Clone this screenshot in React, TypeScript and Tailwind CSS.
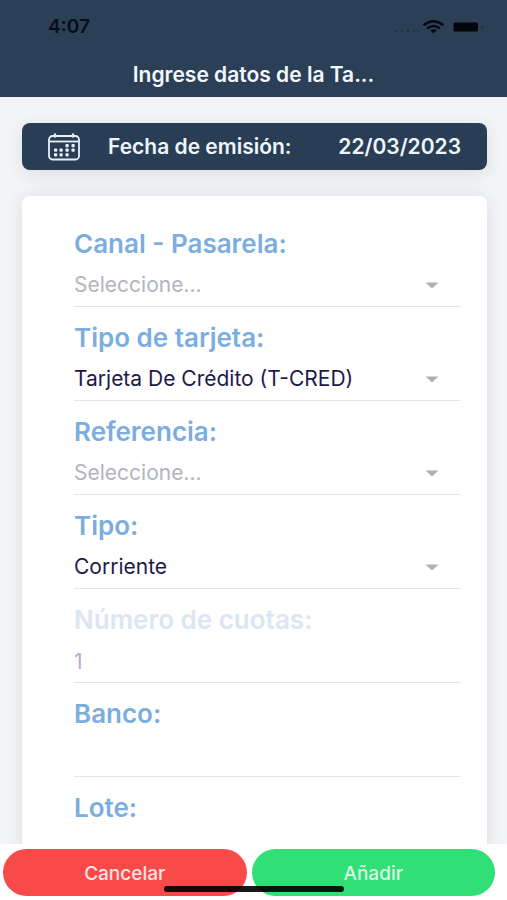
import React from 'react';
import clsx from 'clsx';

interface FieldProps {
  id: string;
  label: string;
  value?: string;
  options?: string[];
  disabled?: boolean;
}

const CONTROL = 'h-[47px] w-full appearance-none border-b border-[#dfe5ef] bg-transparent pt-1 text-[21px] outline-none';

const Field: React.FC<FieldProps> = ({ id, label, value = '', options, disabled }) => (
  <div>
    <label
      htmlFor={id}
      className={clsx(
        'block text-[26px] leading-8 font-semibold',
        disabled ? 'text-[#dce6f3]' : 'text-[#7badde]'
      )}
    >
      {label}
    </label>
    {options ? (
      <div className="relative">
        <select
          id={id}
          defaultValue={value}
          className={clsx(CONTROL, value ? 'text-[#1d1a4b]' : 'text-[#b4b4bd]')}
        >
          {!value && <option value="">Seleccione...</option>}
          {options.map((option) => (
            <option key={option} value={option}>{option}</option>
          ))}
        </select>
        <svg
          viewBox="0 0 14 7"
          className="pointer-events-none absolute top-[22px] right-[21px] h-[7px] w-3.5 fill-[#b0b0b3]"
          aria-hidden="true"
        >
          <path d="M0.5 0.5h13L7 6.5z" />
        </svg>
      </div>
    ) : (
      <input
        id={id}
        type="text"
        defaultValue={value}
        disabled={disabled}
        className={clsx(CONTROL, 'block', disabled ? 'text-[#b5a9d6]' : 'text-[#1d1a4b]')}
      />
    )}
  </div>
);

const CalendarIcon = () => (
  <svg viewBox="0 0 32 28" className="h-7 w-8 shrink-0" fill="none" stroke="#e6f0fa" aria-hidden="true">
    <rect x="1" y="3" width="30" height="23.5" rx="3.5" strokeWidth="1.8" />
    <path d="M1 8.5h30" strokeWidth="1.8" />
    <path d="M7 1.5v2M25 1.5v2" strokeWidth="2.4" strokeLinecap="round" />
    <g fill="#e6f0fa" stroke="none">
      {[19, 25].map((x) => <rect key={x} x={x - 1.5} y="11" width="3.2" height="3.2" rx="0.8" />)}
      {[7.5, 13, 19, 25].map((x) => <rect key={x} x={x - 1.5} y="15.5" width="3.2" height="3.2" rx="0.8" />)}
      {[7.5, 13, 19].map((x) => <rect key={x} x={x - 1.5} y="20.2" width="3.2" height="3.2" rx="0.8" />)}
    </g>
  </svg>
);

const StatusIcons = () => (
  <svg viewBox="0 0 92 16" className="h-4 w-[92px]" aria-hidden="true">
    <g fill="#1d2c3f">
      <circle cx="3" cy="12" r="1" />
      <circle cx="9" cy="12" r="1" />
      <circle cx="15" cy="12" r="1" />
      <circle cx="21" cy="12" r="1" />
    </g>
    <g fill="none" stroke="#050a12" strokeWidth="2.4">
      <path d="M30.5 6.2Q40.500 -1.8 50.5 6.2" />
      <path d="M34.3 9.5Q40.5 4.5 46.7 9.5" />
    </g>
    <path d="M37.3 11.5Q40.5 9 43.7 11.5L40.5 14.3z" fill="#050a12" />
    <rect x="58.5" y="1.5" width="28" height="13" rx="3" fill="none" stroke="#35404f" strokeWidth="1.2" />
    <rect x="60.5" y="3.5" width="24.5" height="9" rx="1.5" fill="#02060c" />
    <path d="M88.5 6q3 2 0 4z" fill="#1d2c3f" />
  </svg>
);

export default function App() {
  return (
    <div className="relative flex h-screen flex-col overflow-hidden bg-[#f3f4f7] font-['Inter',sans-serif]">
      <header className="shrink-0 bg-[#2b4056] pb-[7px]">
        <div className="flex h-[54px] items-center justify-between pr-[22px] pl-12">
          <span className="text-[19px] font-semibold text-[#070d18]">4:07</span>
          <StatusIcons />
        </div>
        <h1 className="pt-1.5 text-center text-[21px] leading-[30px] font-semibold text-[#f3f8fd]">
          Ingrese datos de la Ta...
        </h1>
      </header>

      <main className="min-h-0 flex-1 overflow-y-auto pt-[26px] pr-5 pl-[22px] [scrollbar-width:none]">
        <button
          type="button"
          className="flex h-[47px] w-full items-center rounded-lg bg-[#293e54] px-[26px] text-[21px] font-semibold text-[#eef5fc] shadow-[0_4px_18px_rgba(0,0,0,0.09)]"
        >
          <CalendarIcon />
          <span className="ml-7">Fecha de emisión:</span>
          <span className="ml-auto">22/03/2023</span>
        </button>

        <form className="mt-[26px] flex flex-col gap-[15px] rounded-lg bg-white pt-8 pr-[27px] pb-8 pl-[52px] shadow-[0_0_18px_rgba(0,0,0,0.09)]">
          <Field id="canal" label="Canal - Pasarela:" options={[]} />
          <Field
            id="tipo-tarjeta"
            label="Tipo de tarjeta:"
            value="Tarjeta De Crédito (T-CRED)"
            options={['Tarjeta De Crédito (T-CRED)']}
          />
          <Field id="referencia" label="Referencia:" options={[]} />
          <Field id="tipo" label="Tipo:" value="Corriente" options={['Corriente']} />
          <Field id="cuotas" label="Número de cuotas:" value="1" disabled />
          <Field id="banco" label="Banco:" />
          <Field id="lote" label="Lote:" />
        </form>
      </main>

      <footer className="flex shrink-0 gap-[5px] bg-white pt-[5px] pr-3 pb-1 pl-[3px] text-[19px] font-medium">
        <button type="button" className="h-[47px] flex-1 rounded-full bg-[#f94a4a] pt-1 text-[#ffe4e4]">
          Cancelar
        </button>
        <button type="button" className="h-[47px] flex-1 rounded-full bg-[#30df75] pt-1 text-[#d9fbe6]">
          Añadir
        </button>
      </footer>

      {/* Home indicator */}
      <div className="pointer-events-none absolute inset-x-0 bottom-2 mx-auto h-1.5 w-[180px] rounded-full bg-black/90" />
    </div>
  );
}
